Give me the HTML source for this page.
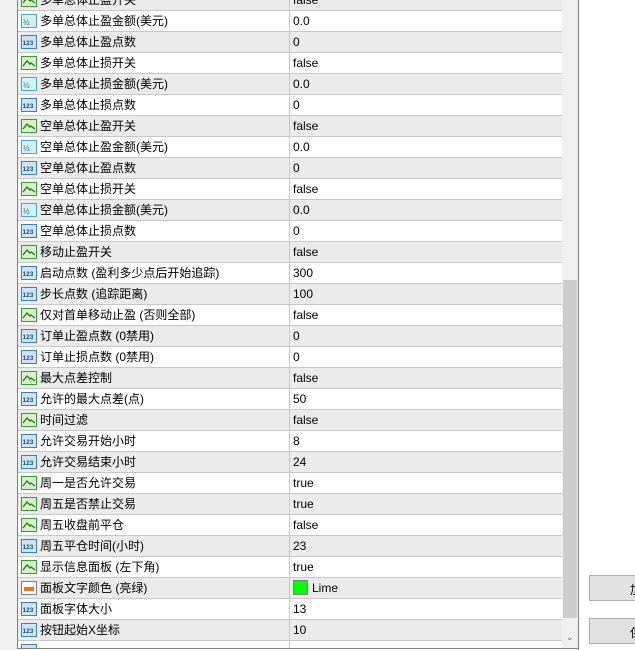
<!DOCTYPE html><html><head><meta charset="utf-8"><style>
body{margin:0;width:635px;height:650px;overflow:hidden;background:#fff;font-family:"Liberation Sans","Noto Sans CJK SC",sans-serif;font-size:12px;color:#000;position:relative}
.left{position:absolute;left:0;top:0;width:17px;height:650px;background:#f0f0f0}
.tbl{position:absolute;left:17px;top:0;width:545px;height:648px;border-left:1px solid #828282;border-bottom:1px solid #828282;overflow:hidden;background:#fff}
.row{position:absolute;left:0;width:545px;height:20px;border-bottom:1px solid #c8c8c8}
.row.g{background:#ebebeb}
.row .n{position:absolute;left:22px;top:0;height:20px;line-height:20px;white-space:nowrap}
.row .v{position:absolute;left:275px;top:0;height:20px;line-height:20px;white-space:nowrap}
.row .d{position:absolute;left:271px;top:0;width:1px;height:21px;background:#c8c8c8}
.row svg{position:absolute;left:3px;top:2px}
.sb{position:absolute;left:562px;top:0;width:16px;height:648px;background:#f0f0f0;border-bottom:1px solid #828282}
.thumb{position:absolute;left:1px;top:280px;width:14px;height:338px;background:#cdcdcd}
.rb{position:absolute;left:578px;top:0;width:1px;height:650px;background:#828282}
.btn{position:absolute;left:589px;width:50px;height:26px;background:#e1e1e1;border:1px solid #adadad;box-sizing:border-box;padding:5px 0 0 40px}
</style></head><body>
<div class="left"></div>
<div class="tbl" id="t">
</div>
<div class="sb"><div class="thumb"></div><div style="position:absolute;left:4px;top:632px;font-size:9px;color:#606060">&#8964;</div></div>
<div class="rb"></div>
<div class="btn" style="top:575px">加</div>
<div class="btn" style="top:618px">保</div>
<script>
var T='<svg width="16" height="16"><rect x="0.5" y="1.5" width="15" height="13" fill="#d8f2c8" stroke="#3a9a3a"/><path d="M2 11 L6 6 L9 9 L10 8 L14 11" fill="none" stroke="#2a7a2a" stroke-width="1.4"/></svg>';
var H='<svg width="16" height="16"><rect x="0.5" y="1.5" width="15" height="13" fill="#d6f0f8" stroke="#4aa8d0"/><text x="2" y="12" font-size="8" fill="#2070a0" font-family="Liberation Sans">½</text></svg>';
var N='<svg width="16" height="16"><rect x="0.5" y="1.5" width="15" height="13" fill="#cfe3f5" stroke="#3a80c0"/><text x="1.5" y="11" font-size="6.5" font-weight="bold" fill="#1a4f90" font-family="Liberation Sans">123</text></svg>';
var C='<svg width="16" height="16"><rect x="0.5" y="1.5" width="15" height="13" fill="#fff" stroke="#808080"/><rect x="3" y="7" width="10" height="4" fill="#f07010"/></svg>';
var d=[[T,'多单总体止盈开关','false'],[H,'多单总体止盈金额(美元)','0.0'],[N,'多单总体止盈点数','0'],[T,'多单总体止损开关','false'],[H,'多单总体止损金额(美元)','0.0'],[N,'多单总体止损点数','0'],[T,'空单总体止盈开关','false'],[H,'空单总体止盈金额(美元)','0.0'],[N,'空单总体止盈点数','0'],[T,'空单总体止损开关','false'],[H,'空单总体止损金额(美元)','0.0'],[N,'空单总体止损点数','0'],[T,'移动止盈开关','false'],[N,'启动点数 (盈利多少点后开始追踪)','300'],[N,'步长点数 (追踪距离)','100'],[T,'仅对首单移动止盈 (否则全部)','false'],[N,'订单止盈点数 (0禁用)','0'],[N,'订单止损点数 (0禁用)','0'],[T,'最大点差控制','false'],[N,'允许的最大点差(点)','50'],[T,'时间过滤','false'],[N,'允许交易开始小时','8'],[N,'允许交易结束小时','24'],[T,'周一是否允许交易','true'],[T,'周五是否禁止交易','true'],[T,'周五收盘前平仓','false'],[N,'周五平仓时间(小时)','23'],[T,'显示信息面板 (左下角)','true'],[C,'面板文字颜色 (亮绿)','<span style="display:inline-block;width:13px;height:13px;background:#00ff00;border:1px solid #808080;vertical-align:-3px;margin-right:4px"></span>Lime'],[N,'面板字体大小','13'],[N,'按钮起始X坐标','10'],[N,'','']];
var h='';for(var i=0;i<d.length;i++){h+='<div class="row'+(i%2==0?' g':'')+'" style="top:'+(-10+21*i)+'px">'+d[i][0]+'<span class="n">'+d[i][1]+'</span><div class="d"></div><span class="v">'+d[i][2]+'</span></div>';}
document.getElementById('t').innerHTML=h;
</script>
</body></html>
